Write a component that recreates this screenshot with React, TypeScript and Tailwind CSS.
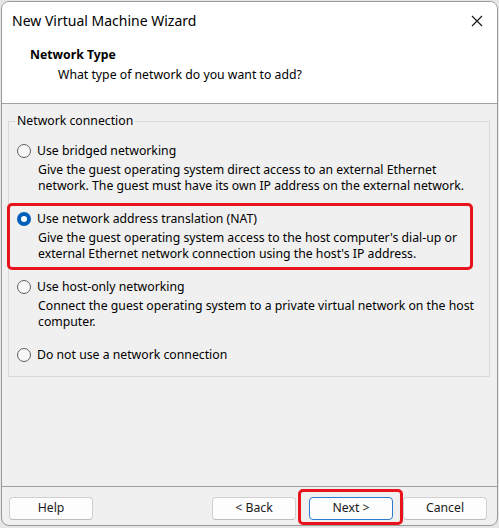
import React from 'react';

const options = [
  {
    label: 'Use bridged networking',
    desc: [
      'Give the guest operating system direct access to an external Ethernet',
      'network. The guest must have its own IP address on the external network.',
    ],
    checked: false,
    highlight: false,
    gap: 'mt-0',
  },
  {
    label: 'Use network address translation (NAT)',
    desc: [
      "Give the guest operating system access to the host computer's dial-up or",
      "external Ethernet network connection using the host's IP address.",
    ],
    checked: true,
    highlight: true,
    gap: 'mt-[17px]',
  },
  {
    label: 'Use host-only networking',
    desc: [
      'Connect the guest operating system to a private virtual network on the host',
      'computer.',
    ],
    checked: false,
    highlight: false,
    gap: 'mt-[17px]',
  },
  {
    label: 'Do not use a network connection',
    desc: [],
    checked: false,
    highlight: false,
    gap: 'mt-[17px]',
  },
];

function Radio({ checked }: { checked: boolean }) {
  return checked ? (
    <span className="flex h-[14px] w-[14px] shrink-0 items-center justify-center rounded-full bg-[#005fb8]">
      <span className="h-[6px] w-[6px] rounded-full bg-white" />
    </span>
  ) : (
    <span className="h-[14px] w-[14px] shrink-0 rounded-full border border-[#5f5f5f] bg-[#f7f7f7]" />
  );
}

function WinButton({ children, primary }: { children: React.ReactNode; primary?: boolean }) {
  return (
    <button
      className={`flex h-[23px] w-[84px] items-center justify-center rounded-[4px] border bg-[#fdfdfd] text-[12.25px] text-[#1a1a1a] ${
        primary ? 'border-[#2f7ad1]' : 'border-[#d0d0d0] border-b-[#bcbcbc]'
      }`}
    >
      {children}
    </button>
  );
}

export default function App() {
  return (
    <div
      className="h-[528px] w-[499px] overflow-hidden bg-[#e6e6e6] pt-px pl-px"
      style={{ fontFamily: '"Noto Sans", sans-serif' }}
    >
      <div className="flex h-[525px] w-[497px] flex-col overflow-hidden rounded-lg border border-[#9a9a9a] bg-[#f0f0f0]">
        {/* Title bar + header */}
        <div className="h-[101px] shrink-0 bg-white">
          <div className="flex h-[36px] items-center justify-between pl-[10px] pr-[14px]">
            <span className="text-[14px] text-black">New Virtual Machine Wizard</span>
            <svg width="12" height="12" viewBox="0 0 12 12" className="mt-[2px]">
              <path d="M1 1L11 11M11 1L1 11" stroke="#1a1a1a" strokeWidth="1.2" />
            </svg>
          </div>
          <div className="pl-[28px] pt-[9px]">
            <div className="text-[12.25px] font-bold leading-[16px] text-black">Network Type</div>
            <div className="mt-[4px] pl-[28px] text-[12.25px] leading-[16px] text-black">
              What type of network do you want to add?
            </div>
          </div>
        </div>
        <div className="h-px w-[495px] shrink-0 bg-[#a0a0a0]" />

        {/* Body */}
        <div className="h-[382px] shrink-0 px-[6px] pt-[9px]">
          <fieldset className="h-[264px] w-[482px] border border-[#dadada] px-[8px]">
            <legend className="-ml-[2px] px-[2px] text-[12.25px] leading-[16px] text-black">
              Network connection
            </legend>
            <div className="mt-[14px] flex flex-col">
              {options.map((o) => (
                <div key={o.label} className={`relative ${o.gap}`}>
                  {o.highlight && (
                    <div className="absolute -top-[8px] -bottom-[8px] -left-[10px] right-[8px] rounded-[5px] border-[3px] border-[#e8141b]" />
                  )}
                  <div className="flex items-center gap-[6px] text-[12.25px] leading-[16px] text-black">
                    <Radio checked={o.checked} />
                    <span>{o.label}</span>
                  </div>
                  {o.desc.length > 0 && (
                    <div className="mt-[3px] pl-[21px] text-[12.25px] leading-[16px] text-black">
                      {o.desc.map((d) => (
                        <div key={d}>{d}</div>
                      ))}
                    </div>
                  )}
                </div>
              ))}
            </div>
          </fieldset>
        </div>

        {/* Footer */}
        <div className="h-px w-[495px] shrink-0 bg-[#a0a0a0]" />
        <div className="flex h-[38px] shrink-0 items-start pl-[7px] pr-[10px] pt-[10px]">
          <WinButton>Help</WinButton>
          <div className="flex-1" />
          <WinButton>&lt; Back</WinButton>
          <div className="relative ml-[13px] flex">
            <div className="absolute -top-[8px] -bottom-[5px] -left-[11px] -right-[10px] rounded-[5px] border-[3px] border-[#e8141b]" />
            <WinButton primary>Next &gt;</WinButton>
          </div>
          <div className="ml-[10px] flex">
            <WinButton>Cancel</WinButton>
          </div>
        </div>
      </div>
    </div>
  );
}
